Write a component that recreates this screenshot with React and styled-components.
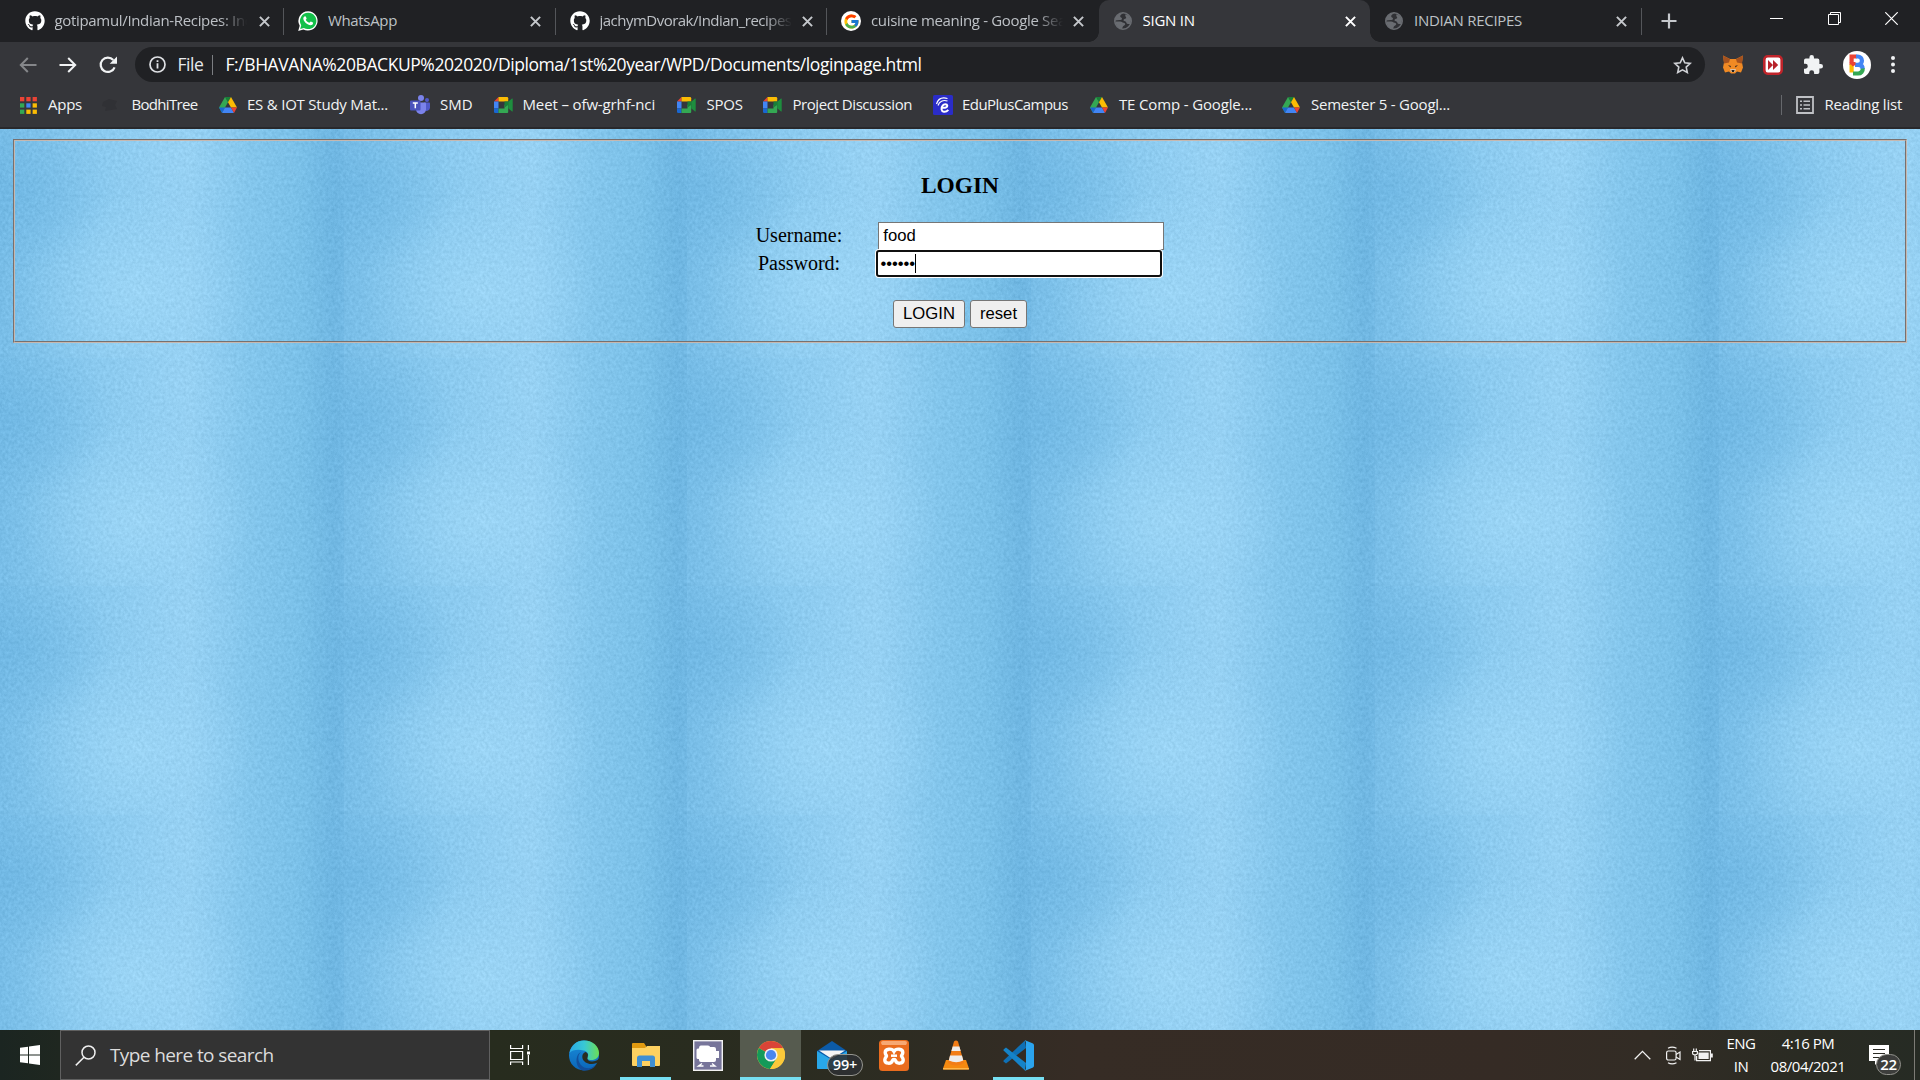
import React from "react";
import styled, { createGlobalStyle } from "styled-components";
import { FaGithub } from "react-icons/fa";
import { FcGoogle } from "react-icons/fc";

const ui = `"Open Sans", "Noto Sans", sans-serif`;

const paperTile = `<svg xmlns="http://www.w3.org/2000/svg" width="343.75" height="228.75" viewBox="0 0 275 183">
<defs>
<linearGradient id="h" x1="0" x2="1" y1="0" y2="0">
<stop offset="0" stop-color="#78bde7"/><stop offset=".1" stop-color="#7fc2ea"/><stop offset=".3" stop-color="#8bcaef"/>
<stop offset=".55" stop-color="#94cff2"/><stop offset=".72" stop-color="#84c6ec"/><stop offset=".88" stop-color="#7ac0e8"/><stop offset=".97" stop-color="#70b7e2"/><stop offset="1" stop-color="#73b9e4"/>
</linearGradient>
<radialGradient id="l"><stop offset="0" stop-color="#a0d8f7" stop-opacity=".7"/><stop offset="1" stop-color="#a0d8f7" stop-opacity="0"/></radialGradient>
<radialGradient id="d"><stop offset="0" stop-color="#68b2e0" stop-opacity=".5"/><stop offset="1" stop-color="#68b2e0" stop-opacity="0"/></radialGradient>
<filter id="n" x="0" y="0" width="275" height="183" filterUnits="userSpaceOnUse" color-interpolation-filters="sRGB">
<feTurbulence type="fractalNoise" baseFrequency=".42 .36" numOctaves="3" seed="7" stitchTiles="stitch" result="t"/>
<feColorMatrix in="t" values="1 0 0 0 0 1 0 0 0 0 1 0 0 0 0 0 0 0 0 1" result="g"/>
<feComposite in="SourceGraphic" in2="g" operator="arithmetic" k1="0" k2="1" k3=".11" k4="-.055"/>
</filter></defs>
<g filter="url(#n)"><rect width="275" height="183" fill="url(#h)"/>
<ellipse cx="110" cy="130" rx="95" ry="80" fill="url(#l)"/>
<ellipse cx="145" cy="20" rx="55" ry="80" fill="url(#l)" opacity=".35"/>
<ellipse cx="12" cy="50" rx="80" ry="65" fill="url(#d)"/>
<ellipse cx="270" cy="65" rx="34" ry="90" fill="url(#d)" opacity=".6"/></g></svg>`;
const paper = `url("data:image/svg+xml,${encodeURIComponent(paperTile)}")`;

const Global = createGlobalStyle`
  *{box-sizing:border-box}
  html,body{margin:0;padding:0}
  body{width:1920px;height:1080px;overflow:hidden}
  svg{display:block;flex:none}
`;
const Screen = styled.div`width:1920px;height:1080px;display:flex;flex-direction:column;background:#35363a;`;

const TabStrip = styled.div`display:flex;height:42px;padding-left:12.5px;background:#202124;`;
const TabBox = styled.div`
  display:flex;align-items:center;position:relative;width:271.5px;height:42px;flex:none;
  padding:0 13px 0 13px;color:${p => (p.$active ? "#fff" : "#bdc1c6")};
  ${p => p.$active && `background:#35363a;border-radius:10px 10px 0 0;
    &::before,&::after{content:"";position:absolute;bottom:0;width:10px;height:10px}
    &::before{left:-10px;background:radial-gradient(circle at 0 0,transparent 9.5px,#35363a 10px)}
    &::after{right:-10px;background:radial-gradient(circle at 100% 0,transparent 9.5px,#35363a 10px)}`}
  ${p => p.$line && `border-right:1px solid #4b4d51;border-image:linear-gradient(transparent 9px,#54565a 9px,#54565a 34px,transparent 34px) 1;`}
`;
const Slot = styled.span`display:flex;align-items:center;justify-content:center;width:20px;height:20px;flex:none;`;
const TabTitle = styled.span`
  width:192px;margin-left:10px;height:20px;margin-top:-3px;overflow:hidden;white-space:pre;
  font:15px/20px ${ui};letter-spacing:${p => p.$ls}px;
  ${p => p.$fade && `-webkit-mask-image:linear-gradient(90deg,#000 165px,transparent 192px);mask-image:linear-gradient(90deg,#000 165px,transparent 192px);`}
`;
const TabIcon = styled(Slot)`margin-left:${p => p.$shift || 0}px;`;
const TabClose = styled.span`display:flex;margin-left:auto;margin-right:${p => p.$end}px;`;
const NewTab = styled.div`display:flex;align-items:center;margin-left:19.5px;`;
const WindowButtons = styled.div`display:flex;margin-left:auto;height:36px;`;
const WindowButton = styled.div`width:57.3px;height:36px;display:flex;align-items:center;justify-content:center;`;

const Toolbar = styled.div`display:flex;align-items:center;height:45px;padding-right:25px;`;
const NavButtons = styled.div`display:flex;align-items:center;width:135px;padding-left:18.5px;gap:22px;`;
const Omnibox = styled.div`
  display:flex;align-items:center;width:1570px;height:35px;border-radius:18px;background:#202124;padding:0 13px 0 14px;
`;
const Scheme = styled.span`margin-left:11.5px;font:17.5px/24px ${ui};letter-spacing:-.43px;color:#e8eaed;margin-top:-1px;`;
const SchemeLine = styled.i`width:1px;height:20px;margin:0 12px 0 9px;background:#7c7e82;`;
const Url = styled.span`flex:1;font:17.5px/24px ${ui};letter-spacing:-.424px;color:#fff;white-space:pre;margin-top:-1px;`;
const Extensions = styled.div`display:flex;align-items:center;flex:1;justify-content:space-between;padding-left:18px;`;

const Bookmarks = styled.div`display:flex;align-items:center;height:40px;padding:0 18px 4px;`;
const Bookmark = styled.div`display:flex;align-items:center;height:34px;width:${p => p.$w}px;color:#f1f3f4;flex:none;`;
const BookmarkLabel = styled.span`
  margin-left:${p => p.$gap || 10}px;font:15px/20px ${ui};letter-spacing:${p => p.$ls}px;white-space:pre;margin-top:-2px;
`;
const Reading = styled.div`display:flex;align-items:center;margin-left:auto;height:20px;padding-left:13px;border-left:1px solid #66686c;color:#f1f3f4;`;
const ChromeEdge = styled.div`height:2px;background:#29292c;`;

const Page = styled.main`
  height:901px;flex:none;padding:10px 13px;background:${paper} 0 0/343.75px 228.75px #85c5ec;
  font-family:"Liberation Serif","Times New Roman",serif;color:#000;
`;
const GrooveOuter = styled.div`height:203.5px;border:1px solid;border-color:#77706f #c6b8b0 #c6b8b0 #77706f;`;
const LoginForm = styled.form`
  height:100%;border:1px solid;border-color:#c6b8b0 #77706f #77706f #c6b8b0;
  display:flex;flex-direction:column;align-items:center;
`;
const Heading = styled.h3`margin:30px 0 0;font-size:23.4px;line-height:28px;height:28px;`;
const FieldRow = styled.div`display:flex;align-items:center;height:28px;margin-top:${p => p.$top || 0}px;`;
const FieldLabel = styled.label`font-size:20px;line-height:24px;margin-right:${p => p.$gap}px;margin-top:-2px;`;
const Field = styled.div`
  display:flex;align-items:center;width:286px;height:28px;padding-left:4px;background:#fff;
  border:1px solid #767676;border-top-width:1.5px;font:16.67px/20px "Liberation Sans",Arial,sans-serif;
  ${p => p.$focus && `position:relative;height:27px;padding-left:2.5px;border:2px solid #101010;border-radius:3px;box-shadow:0 0 0 1px #fff;`}
`;
const Dots = styled.span`letter-spacing:-.1px;`;
const Caret = styled.i`width:1px;height:19px;background:#000;`;
const Actions = styled.div`display:flex;gap:5px;margin-top:22.500px;`;
const Action = styled.button`
  width:${p => p.$w}px;height:28px;padding:0 0 1px;border:1px solid #767676;border-radius:3px;background:#efefef;color:#000;
  font:16.67px/20px "Liberation Sans",Arial,sans-serif;
`;

const Taskbar = styled.div`
  display:flex;height:50px;color:#fff;
  background:linear-gradient(90deg,#1b2521 0,#1f2720 60px,#272c1e 490px,#292c1f 700px,#2d2c22 900px,#362c25 1080px,#352b25 1500px,#322c25 1650px,#2a2b23 1800px,#262b24 1920px);
`;
const StartButton = styled.div`width:60px;display:flex;align-items:center;padding-left:20px;`;
const Search = styled.div`
  display:flex;align-items:center;width:430px;height:50px;padding-left:13.5px;border:1px solid #606060;background:#333;
`;
const SearchText = styled.span`margin-left:14.5px;font:19px/26px ${ui};letter-spacing:-.6px;color:#dcdcdc;margin-top:-1px;`;
const TaskView = styled.div`width:63px;display:flex;align-items:center;padding-left:20px;`;
const TaskApp = styled.div`
  position:relative;display:flex;align-items:center;justify-content:center;width:${p => p.$w || 62}px;height:50px;
  background:${p => (p.$on ? "#565b4f" : "transparent")};
  ${p => p.$line && `&::after{content:"";position:absolute;bottom:0;left:50%;width:${p.$line}px;margin-left:-${p.$line / 2}px;height:3px;background:#76dff2}`}
`;
const MailBadge = styled.span`
  position:absolute;left:26px;top:24px;width:36px;height:22px;border:1px solid #95958f;border-radius:11px;background:rgba(45,48,50,.88);
  font:600 14.5px/19px ${ui};letter-spacing:-.2px;text-align:center;
`;
const Tray = styled.div`display:flex;align-items:center;margin-left:auto;`;
const TrayIcon = styled.span`display:flex;width:${p => p.$w}px;`;
const TrayText = styled.div`
  display:flex;flex-direction:column;align-items:center;width:${p => p.$w}px;font:15px/22.500px ${ui};letter-spacing:-.48px;margin-top:-1px;
`;
const Notifications = styled.div`position:relative;width:45px;margin-left:15px;height:50px;padding-top:15px;`;
const CountBadge = styled.span`
  position:absolute;left:7px;top:24px;width:25px;height:21px;border:1px solid #92928c;border-radius:11px;background:#3d3e3c;
  font:600 15px/19px ${ui};text-align:center;letter-spacing:-.3px;
`;
const DesktopEdge = styled.i`width:6px;height:50px;border-left:1px solid #7c7c76;`;

const Globe = () => (
  <svg width="18" height="18" viewBox="0 0 18 18"><circle cx="9" cy="9" r="8.200" fill="#303135" stroke="#696c71" strokeWidth="1.600" />
    <path d="M1 8.500C1.200 4 4.500.8 9.500.9 8 2 6.200 2.600 6.200 4.200c0 1.200 1.500 1.200 1.800 2.200.3 1.200-1.200 1.600-2.500 1.600zM11.500 2.200l3.500 1.600L17 8l-1 4c-2 .4-3.500-.3-3.700-1.500-.3-1.400-2-1-2.800-2 0-1.500 1.500-1.500 2.500-2.200C13 5.500 10.500 4 11.500 2.200zM1.500 9.500H6c2 0 2 1 3.500 1.200 1.500.3 2 1 1.500 2-.5 1-2 1-2.300 2.300L8 17C4 16.500 1.800 13.500 1.500 9.500z" fill="#696c71" />
  </svg>
);
const Close = ({ c = "#c5c8cc" }) => (
  <svg width="11" height="11" viewBox="0 0 11 11"><path d="M.9.9l9.200 9.200M10.100.9L.9 10.100" stroke={c} strokeWidth="2" /></svg>
);
const WhatsLogo = () => (
  <svg width="20" height="20" viewBox="0 0 20 20"><path d="M10.200.2a9.700 9.700 0 0 0-8.500 14.500L.2 19.900l5.200-1.400A9.700 9.700 0 1 0 10.200.2z" fill="#fff" />
    <path d="M10.200 1.700a8.200 8.200 0 0 0-7 12.500l-1 3.700 3.700-1A8.200 8.200 0 1 0 10.200 1.700z" fill="#14c04a" />
    <path d="M7.100 5.200c.5 0 .7.300 1.500 2.200.1.500-.7 1-.8 1.300 0 .5 2.100 2.900 3.600 3 .4-.1 1-1.200 1.400-1.200.3 0 2.300 1 2.300 1.200 0 1.800-1.400 2.500-2.500 2.500-3.200 0-7.300-4.200-7.300-6.800 0-1 .9-2.200 1.800-2.200z" fill="#fff" /></svg>
);
const GoogleBadge = styled.span`display:flex;align-items:center;justify-content:center;width:20px;height:20px;border-radius:50%;background:#fff;`;
const Drive = () => (
  <svg width="18" height="16" viewBox="0 0 18 16"><path d="M6 0h6L9 5.300z" fill="#188038" /><path d="M6 0l3 5.300-6 10.500L0 10.600z" fill="#34a853" />
    <path d="M12 0l6 10.600h-6L9 5.300z" fill="#fbbc04" /><path d="M0 10.600h6L3 15.900z" fill="#1967d2" /><path d="M6 10.600h6l3 5.300H3z" fill="#4285f4" /><path d="M12 10.600h6l-3 5.300z" fill="#ea4335" /></svg>
);
const Meet = () => (
  <svg width="19" height="16" viewBox="0 0 19 16"><path d="M4.500 0v4.500H0z" fill="#ea4335" /><path d="M4.500 0H13a1.200 1.200 0 0 1 1.200 1.200V4.500H4.500z" fill="#fbbc04" /><path d="M0 4.500h4.500v7H0z" fill="#4285f4" />
    <path d="M0 11.500h4.500V16H1.200A1.200 1.200 0 0 1 0 14.800z" fill="#1967d2" /><path d="M4.500 11.500h6V8l3.700-3.500V15q0 1-1 1h-8.700z" fill="#34a853" /><path d="M14.200 4.800L18 1.600q.7-.4.7.4v12q0 .8-.7.400l-3.800-3.200z" fill="#1e8e3e" /><path d="M10.500 4.500h3.700V8l-3.700 2.500z" fill="#188038" /></svg>
);
const Teams = () => (
  <svg width="20" height="20" viewBox="0 0 20 20"><circle cx="17" cy="5" r="2" fill="#5059c9" /><circle cx="11" cy="3" r="3" fill="#7b83eb" />
    <path d="M14 7.500h5.200q.8 0 .8.800v4.700a3.300 3.300 0 0 1-6 1.500z" fill="#5059c9" /><path d="M6 7.500h9.200q.8 0 .8.800v6a5 5 0 0 1-10 0z" fill="#7b83eb" />
    <rect y="5.500" width="10.500" height="10" rx="1" fill="#4b53bc" /><path d="M2.800 8h5M5.300 8v5.300" stroke="#fff" strokeWidth="1.500" /></svg>
);
const Edu = () => (
  <svg width="20" height="20" viewBox="0 0 20 20"><rect width="20" height="20" rx="1.500" fill="#2a2cc8" />
    <g fill="none" stroke="#fff"><path d="M3.500 9C5 4 9 2 14.500 3.500M5 10.500c1.300-4 5-6 9.500-4.500" strokeWidth="1.200" /><path d="M8.800 12.600c3 .6 5.800-.2 5.500-2-.3-1.700-3.400-1.600-4.700 0-1.700 2-1.500 5.800 1.300 6.200 1.700.2 3.400-.8 4.400-2" strokeWidth="2" /></g></svg>
);
const AppsGrid = () => (
  <svg width="17" height="17" viewBox="0 0 17 17">{["#ea4335", "#ea4335", "#ea4335", "#34a853", "#4285f4", "#fbbc04", "#34a853", "#fbbc04", "#fbbc04"].map((c, i) => (
    <rect key={i} x={(i % 3) * 6.3} y={Math.floor(i / 3) * 6.3} width="4.300" height="4.300" fill={c} />))}</svg>
);
const Bodhi = () => (
  <svg width="18" height="14" viewBox="0 0 18 14"><path d="M2 4l6-3 8 2-2 4 2 4-6 1-6 1 1-4-4-1z" fill="#303135" /></svg>
);

const tabs = [
  { icon: <FaGithub size={20} color="#fff" />, title: "gotipamul/Indian-Recipes: India", ls: -0.33, fade: true, line: true, shift: -1 },
  { icon: <WhatsLogo />, title: "WhatsApp", ls: -0.34, line: true, shift: 1 },
  { icon: <FaGithub size={20} color="#fff" />, title: "jachymDvorak/Indian_recipes: A", ls: -0.514, fade: true, line: true, shift: 1 },
  { icon: <GoogleBadge><FcGoogle size={17} /></GoogleBadge>, title: "cuisine meaning - Google Search", ls: -0.335, fade: true, shift: 1 },
  { icon: <Globe />, title: "SIGN IN", ls: -0.243, active: true, shift: 1 },
  { icon: <Globe />, title: "INDIAN RECIPES", ls: -0.289, line: true, shift: 1 },
];
const marks = [
  { icon: <AppsGrid />, label: "Apps", ls: -0.25, w: 82 },
  { icon: <Bodhi />, label: "BodhiTree", ls: -0.68, w: 118, gap: 11.5 },
  { icon: <Drive />, label: "ES & IOT Study Mat...", ls: -0.222, w: 192, gap: 9 },
  { icon: <Teams />, label: "SMD", ls: 0, w: 83 },
  { icon: <Meet />, label: "Meet – ofw-grhf-nci", ls: -0.13, w: 183.500, gap: 9.5 },
  { icon: <Meet />, label: "SPOS", ls: -0.25, w: 86 },
  { icon: <Meet />, label: "Project Discussion", ls: -0.435, w: 170.500 },
  { icon: <Edu />, label: "EduPlusCampus", ls: -0.56, w: 156, gap: 9 },
  { icon: <Drive />, label: "TE Comp - Google...", ls: -0.146, w: 192 },
  { icon: <Drive />, label: "Semester 5 - Googl...", ls: -0.229, w: 170 },
];

const Arrow = ({ c, flip }) => (
  <svg width="18" height="16" viewBox="0 0 18 16" transform={flip ? "scale(-1,1)" : undefined}><path d="M17.500 8H2M8.800 1L1.800 8l7 7" fill="none" stroke={c} strokeWidth="2" /></svg>
);

export default function App() {
  return (
    <Screen>
      <Global />
      <TabStrip>
        {tabs.map((t, i) => (
          <TabBox key={i} $active={t.active} $line={t.line}>
            <TabIcon $shift={t.shift}>{t.icon}</TabIcon>
            <TabTitle $ls={t.ls} $fade={t.fade}>{t.title}</TabTitle>
            <TabClose $end={t.line ? 0.5 : 1.5}><Close c={t.active ? "#fff" : "#c5c8cc"} /></TabClose>
          </TabBox>
        ))}
        <NewTab><svg width="16" height="16" viewBox="0 0 16 16"><path d="M8 .5v15M.5 8h15" stroke="#c5c8cc" strokeWidth="2.200" /></svg></NewTab>
        <WindowButtons>
          <WindowButton><svg width="13" height="13" viewBox="0 0 13 13"><path d="M0 6.500h13" stroke="#fff" /></svg></WindowButton>
          <WindowButton><svg width="13" height="13" viewBox="0 0 13 13" fill="none" stroke="#fff"><path d="M.5 2.500h10v10H.5zM2.500 2.500v-2h10v10h-2" /></svg></WindowButton>
          <WindowButton><svg width="13" height="13" viewBox="0 0 13 13"><path d="M.3.3l12.400 12.400M12.700.3L.3 12.700" stroke="#fff" strokeWidth="1.200" /></svg></WindowButton>
        </WindowButtons>
      </TabStrip>

      <Toolbar>
        <NavButtons>
          <Arrow c="#85878a" />
          <Arrow c="#f1f3f4" flip />
          <svg width="18" height="18" viewBox="0 0 18 18"><path d="M15.600 11.300A7.200 7.200 0 1 1 14.300 4" fill="none" stroke="#f1f3f4" strokeWidth="2.200" /><path d="M18 .5v7.300h-7.300z" fill="#f1f3f4" /></svg>
        </NavButtons>
        <Omnibox>
          <svg width="17" height="17" viewBox="0 0 17 17"><circle cx="8.500" cy="8.500" r="7.500" fill="none" stroke="#dfe1e5" strokeWidth="1.700" /><path d="M8.500 4.200v1.700M8.500 7.300v5.200" stroke="#dfe1e5" strokeWidth="1.800" /></svg>
          <Scheme>File</Scheme>
          <SchemeLine />
          <Url>F:/BHAVANA%20BACKUP%202020/Diploma/1st%20year/WPD/Documents/loginpage.html</Url>
          <svg width="19" height="18" viewBox="0 0 19 18"><path d="M9.500 1.800l2.300 5 5.400.6-4 3.700 1.100 5.400-4.800-2.700-4.800 2.700 1.100-5.400-4-3.700 5.400-.6z" fill="none" stroke="#d0d2d6" strokeWidth="1.600" /></svg>
        </Omnibox>
        <Extensions>
          <svg width="20" height="19" viewBox="0 0 20 19"><path d="M0 .5l7 3.500h6l7-3.500-1 7 1 5-2 5-4-1-2 2H8l-2-2-4 1-2-5 1-5z" fill="#f08a24" /><path d="M0 .5l7 3.500-1 3.500-5 1zM20 .5L13 4l1 3.500 5 1z" fill="#a5521f" /><path d="M5 10l3 1-.5 1.500zM15 10l-3 1 .5 1.500z" fill="#3c2a20" /><path d="M7 14h6l-1 3H8z" fill="#dcc0a5" /><path d="M8.500 15h3l-.5 2H9z" fill="#222" /></svg>
          <svg width="20" height="20" viewBox="0 0 20 20"><rect x="1.300" y="1.300" width="17.400" height="17.400" rx="3.500" fill="#fff" stroke="#c0242a" strokeWidth="2.600" /><path d="M5 5l5 5-5 5zM10 5l5.200 5-5.200 5z" fill="#b8232a" /></svg>
          <svg width="19" height="19" viewBox="2 1 21 21"><path d="M20.500 11H19V7a2 2 0 0 0-2-2h-4V3.500a2.500 2.500 0 0 0-5 0V5H4a2 2 0 0 0-2 2v3.800h1.500a2.700 2.700 0 0 1 0 5.400H2V20a2 2 0 0 0 2 2h3.800v-1.500a2.700 2.700 0 0 1 5.400 0V22H17a2 2 0 0 0 2-2v-4h1.500a2.500 2.500 0 0 0 0-5z" fill="#f1f3f4" /></svg>
          <svg width="28" height="28" viewBox="0 0 28 28"><circle cx="14" cy="14" r="14" fill="#fff" /><g fill="none" strokeWidth="4.200"><path d="M8.600 14V5.500h5" stroke="#ea4335" /><path d="M13 5.500h1.800a4 4 0 0 1 0 8.300H12M15.500 13.800c3 0 4.200 2 4.200 4.200" stroke="#4285f4" /><path d="M8.600 13.500v8" stroke="#fbbc04" /><path d="M19.700 17.500a4.500 4.500 0 0 1-4.500 5H10" stroke="#34a853" /></g><path d="M6.500 11h6v3l-3 1.500z" fill="#ea4335" /></svg>
          <svg width="4" height="17" viewBox="0 0 4 17" fill="#f1f3f4"><circle cx="2" cy="2" r="2" /><circle cx="2" cy="8.500" r="2" /><circle cx="2" cy="15" r="2" /></svg>
        </Extensions>
      </Toolbar>

      <Bookmarks>
        {marks.map((m, i) => (
          <Bookmark key={i} $w={m.w}><Slot>{m.icon}</Slot><BookmarkLabel $ls={m.ls} $gap={m.gap}>{m.label}</BookmarkLabel></Bookmark>
        ))}
        <Reading>
          <Slot><svg width="18" height="18" viewBox="0 0 18 18"><path d="M1 1h16v16H1z" fill="none" stroke="#bfc1c5" strokeWidth="1.800" /><path d="M4 5.300h2M4 9h2M4 12.700h2M7.500 5.300h6.500M7.500 9h6.500M7.500 12.700h6.500" stroke="#bfc1c5" strokeWidth="1.500" /></svg></Slot>
          <BookmarkLabel $ls={-0.233}>Reading list</BookmarkLabel>
        </Reading>
      </Bookmarks>
      <ChromeEdge />

      <Page>
        <GrooveOuter>
          <LoginForm>
            <Heading>LOGIN</Heading>
            <FieldRow $top={22.500}>
              <FieldLabel $gap={36}>Username:</FieldLabel>
              <Field>food</Field>
            </FieldRow>
            <FieldRow>
              <FieldLabel $gap={36}>Password:</FieldLabel>
              <Field $focus><Dots>••••••</Dots><Caret /></Field>
            </FieldRow>
            <Actions>
              <Action type="button" $w={72}>LOGIN</Action>
              <Action type="button" $w={57}>reset</Action>
            </Actions>
          </LoginForm>
        </GrooveOuter>
      </Page>

      <Taskbar>
        <StartButton><svg width="20" height="20" viewBox="0 0 20 20" fill="#fff"><path d="M0 2.800l8-1.100v7.800H0zM9 1.500L20 0v9.500H9zM0 10.500h8v7.800l-8-1.100zM9 10.500h11V20L9 18.500z" /></svg></StartButton>
        <Search>
          <svg width="21" height="21" viewBox="0 0 21 21" fill="none" stroke="#f0f0f0" strokeWidth="1.500"><circle cx="13.500" cy="7.500" r="6.500" /><path d="M9 12.200L.8 20.400" /></svg>
          <SearchText>Type here to search</SearchText>
        </Search>
        <TaskView><svg width="20" height="20" viewBox="0 0 20 20" fill="none" stroke="#fff" strokeWidth="1.200"><path d="M.6 0v3.500h12V0M.6 6.500h12v8H.6zM.6 20v-3h12v3M18.400 0v5M18.400 10v10" /><path d="M17 6.500h3v3h-3z" fill="#fff" stroke="none" /></svg></TaskView>
        <TaskApp>
          <svg width="30" height="31" viewBox="0 0 30 31"><defs>
            <linearGradient id="eg" x1="0" x2="1"><stop offset="0" stopColor="#2aa9e6" /><stop offset=".5" stopColor="#38c8d5" /><stop offset="1" stopColor="#6cdf54" /></linearGradient>
            <linearGradient id="eb" x1="0" x2="0" y1="0" y2="1"><stop offset="0" stopColor="#1a8ddb" /><stop offset="1" stopColor="#0b66b8" /></linearGradient></defs>
            <circle cx="15" cy="15.500" r="15" fill="url(#eb)" /><path d="M.5 13C2 5 8 .500 15 .500c9 0 15 6 15 12.500 0 4.500-3.500 7-7.500 7-3.500 0-5-1.300-4-2.800 1.700-2.500.2-6.200-4-6.700C9 9 3 10 .500 13z" fill="url(#eg)" />
            <path d="M12 12c-4 3.500-3.500 10 1 14 4 3.300 10 3 14.500-1.500C25 28.500 20 31 14 30.500 6 28 5.500 15 12 12z" fill="#124f9c" /><path d="M18.700 17c-1.200 2 .5 4.500 4.300 4.500 3 0 5-.8 7-3l1 3-4 1.800c-3.500 1.500-9 1-12-2.300-3-3.500-1.800-8 1.500-9 2 .8 3 2.500 2.200 4z" fill="#2a2d20" /></svg>
        </TaskApp>
        <TaskApp $line={51} $w={61}>
          <svg width="28" height="24" viewBox="0 0 28 24"><path d="M0 1q0-1 1-1h11l2 3v6H0z" fill="#e09a10" /><path d="M0 5l13 0 2-2h13v19q0 1-1 1H1q-1 0-1-1z" fill="#fdd160" /><path d="M5 24V15q0-2.500 2.500-2.500h13Q23 12.500 23 15v9h-5v-6h-8v6z" fill="#3f8fd2" /></svg>
        </TaskApp>
        <TaskApp $w={64}>
          <svg width="30" height="31" viewBox="0 0 30 31"><rect x=".7" y=".7" width="28.600" height="29.600" fill="#77759a" stroke="#f2f2f2" strokeWidth="1.400" /><path d="M5 8.500q-1.500 0-1.500 1.500v7.500q0 1.500 1.500 1.500h1v1q0 2 2 2h13q2 0 2-2v-2h3v-7h-3V9q0-2-2-2h-4q0-1.500-2-1.500H8Q6 5.500 6 8.500z" fill="#fff" /><path d="M9 23.500l-3.500 2.500h5M19 23.500l3 2.500h-5" stroke="#fff" fill="none" strokeWidth="1.400" /></svg>
        </TaskApp>
        <TaskApp $on $w={61} $line={61}>
          <svg width="28" height="28" viewBox="0 0 28 28"><circle cx="14" cy="14" r="14" fill="#fbc93a" /><path d="M14 14L1.900 7A14 14 0 0 1 26.200 7.200H14z" fill="#da4437" /><path d="M1.900 7A14 14 0 0 0 13 28l7-11-6-3z" fill="#149a59" /><path d="M14 7.200h12.200A14 14 0 0 1 13 28l7-11z" fill="#fbc93a" /><circle cx="14" cy="14" r="6.600" fill="#f1f1f1" /><circle cx="14" cy="14" r="5.100" fill="#4a86ee" /></svg>
        </TaskApp>
        <TaskApp $w={62}>
          <svg width="30" height="28" viewBox="0 0 30 28"><path d="M0 10L15 0l15 10v17q0 1-1 1H1q-1 0-1-1z" fill="#0c5ba8" /><path d="M0 10l15 9 15-9v17q0 1-1 1H1q-1 0-1-1z" fill="#29a7e8" /><path d="M2 9.500h26L15 18z" fill="#f5f5f5" /></svg>
          <MailBadge>99+</MailBadge>
        </TaskApp>
        <TaskApp $w={62}>
          <svg width="30" height="31" viewBox="0 0 30 31"><rect width="30" height="31" rx="3.500" fill="#ea6c1e" /><path d="M2 3q0-2 2-2h22q2 0 2 2l-1 2H3z" fill="#f7a873" /><path d="M15 11.500c-2-3.500-8.800-3-8.800 1 0 2 1.300 2.600 1.300 3.400S5.800 17.700 5.800 20c0 4 6.500 4.300 7.700.5.500-1.500 2.500-1.500 3 0 1.200 3.800 7.700 3.500 7.700-.5 0-2.300-1.700-3.300-1.700-4.100s1.300-1.400 1.300-3.400c0-4-6.800-4.500-8.800-1z" fill="none" stroke="#fff" strokeWidth="3.400" /><path d="M12 15.700h6" stroke="#fff" strokeWidth="2.500" /></svg>
        </TaskApp>
        <TaskApp $w={62}>
          <svg width="26" height="30" viewBox="0 0 26 30"><path d="M3 20h20l3 8.500q0 1-1 1H1q-1 0-1-1z" fill="#f58a10" /><path d="M11 1.500q2-2 4 0L21 23q-8 5-16 0z" fill="#f27d16" /><path d="M9.700 6.500h6.700l1.300 4.500H8.400zM7 15.500h12l1.300 5q-7 3.500-14.500 0z" fill="#ececec" /><path d="M0 28h26v1.500H0z" fill="#ffb648" /></svg>
        </TaskApp>
        <TaskApp $w={63} $line={51}>
          <svg width="31" height="31" viewBox="0 0 31 31"><path d="M23 8L3 23.500 .8 21.800q-.8-.8 0-1.600L22 .500z" fill="#0f70b5" /><path d="M23 23L3 7.500.8 9.200q-.8.800 0 1.600L22 30.500z" fill="#1583c8" /><path d="M22 .3l7.500 3q1.500.7 1.500 2v20.400q0 1.300-1.500 2l-7.500 3q-.7.200 1-1.700V2q-1.500-2-1-1.700z" fill="#2ba4ee" /></svg>
        </TaskApp>
        <Tray>
          <TrayIcon $w={32}><svg width="17" height="10" viewBox="0 0 17 10"><path d="M.7 9.200l7.800-7.800 7.800 7.800" fill="none" stroke="#f2f2f2" strokeWidth="1.300" /></svg></TrayIcon>
          <TrayIcon $w={26}><svg width="15" height="19" viewBox="0 0 15 19" fill="none" stroke="#f2f2f2" strokeWidth="1.200"><rect x=".6" y="5" width="9.500" height="9" rx="1.800" /><path d="M10 8.500L14 6v7.500l-4-2.500M2 2.200Q6 0 10.500 2.200M2 16.800q4 2.200 8.500 0" /></svg></TrayIcon>
          <TrayIcon $w={28}><svg width="21" height="14" viewBox="0 0 21 14" fill="none" stroke="#f2f2f2" strokeWidth="1.200"><path d="M7 2.600h11.400v10H4.600V8" /><path d="M6.500 4.500h10.200v6.500H6.500zM19 5.500h1.800v4H19z" fill="#f2f2f2" stroke="none" /><path d="M.6 3.500h4.800v1.800q0 1.500-2.400 1.500T.6 5.300zM1.700.5v3M4.300.5v3M3 7v5.500" /></svg></TrayIcon>
          <TrayText $w={42}><span>ENG</span><span>IN</span></TrayText>
          <TrayText $w={92}><span>4:16 PM</span><span>08/04/2021</span></TrayText>
          <Notifications>
            <svg width="20" height="20" viewBox="0 0 20 20"><path d="M0 0h20v16H10l-4 4v-4H0z" fill="#fff" /><path d="M4 4.500h12M4 8.500h12M4 12.500h7" stroke="#2b2b25" strokeWidth="1.200" /></svg>
            <CountBadge>22</CountBadge>
          </Notifications>
          <DesktopEdge />
        </Tray>
      </Taskbar>
    </Screen>
  );
}
